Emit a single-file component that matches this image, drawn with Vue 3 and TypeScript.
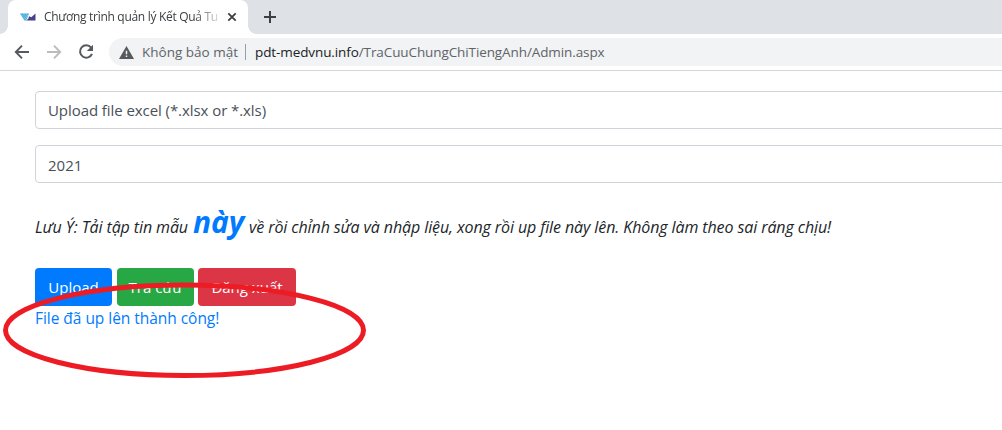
<script setup lang="ts">
interface Action {
  label: string
  kind: string
}

const actions: Action[] = [
  { label: 'Upload', kind: 'primary' },
  { label: 'Tra cứu', kind: 'success' },
  { label: 'Đăng xuất', kind: 'danger' },
]
</script>

<template>
  <div class="window">
    <header class="tabstrip">
      <div class="tab">
        <svg class="favicon" width="16" height="9" viewBox="0 0 16 9">
          <path d="M0 0.5H9L7.5 4.2L6 7.5H4.5Z" fill="#35a5d8" />
          <path d="M1 1.2L6 6.8M3.3 0.8L7 4.8M5.8 .6L8 3M4.8 .6L2.4 3M7.6 .6L3.7 5M8.6 1.6L4.6 6.6" stroke="#c4eaf7" stroke-width=".4" />
          <path d="M15.5 0.5V7.5H6Q8.5 6.5 9.2 3.2L11.3 4.2Z" fill="#46438c" />
        </svg>
        <span class="tab-title">Chương trình quản lý Kết Quả Tu</span>
        <svg class="tab-close" width="10" height="10" viewBox="0 0 10 10">
          <path d="M1.3 1.3L8.7 8.7M8.7 1.3L1.3 8.7" stroke="#3c4043" stroke-width="1.8" />
        </svg>
      </div>
      <svg class="new-tab" width="12" height="12" viewBox="0 0 12 12">
        <path d="M6 0V12M0 6H12" stroke="#3c4043" stroke-width="2" />
      </svg>
    </header>

    <nav class="toolbar">
      <svg class="nav-icon" width="16" height="16" viewBox="0 0 16 16">
        <path d="M15 8H2.5M8 1.7L1.8 8L8 14.3" fill="none" stroke="#56595d" stroke-width="1.9" />
      </svg>
      <svg class="nav-icon" width="16" height="16" viewBox="0 0 16 16">
        <path d="M1 8H13.5M8 1.7L14.2 8L8 14.3" fill="none" stroke="#bbbcbe" stroke-width="1.9" />
      </svg>
      <svg class="nav-icon" width="16" height="16" viewBox="0 0 16 16">
        <path d="M13.1 3.6A6.2 6.2 0 1 0 14 9.8" fill="none" stroke="#56595d" stroke-width="2" />
        <path d="M15 0.8V7H8.8Z" fill="#56595d" />
      </svg>
      <div class="omnibox">
        <svg class="warning" width="15" height="13" viewBox="0 0 15 13">
          <path d="M7.5 0L15 13H0Z" fill="#55585c" />
          <path d="M7.5 4.8V8.2M7.5 9.5V11" stroke="#f1f3f4" stroke-width="1.5" />
        </svg>
        <span class="insecure">Không bảo mật</span>
        <span class="divider"></span>
        <span class="url"><b>pdt-medvnu.info</b>/TraCuuChungChiTiengAnh/Admin.aspx</span>
      </div>
    </nav>

    <main class="page">
      <div class="field"><span class="file-label">Upload file excel (*.xlsx or *.xls)</span></div>
      <div class="field"><span class="year">2021</span></div>
      <p class="note"><span class="note-start">Lưu Ý: Tải tập tin mẫu</span><a class="sample">này</a><span class="note-end">về rồi chỉnh sửa và nhập liệu, xong rồi up file này lên. Không làm theo sai ráng chịu!</span></p>
      <div class="actions">
        <button v-for="a in actions" :key="a.kind" class="btn" :class="a.kind">{{ a.label }}</button>
      </div>
      <div class="message"><span>File đã up lên thành công!</span></div>
    </main>

    <svg class="highlight" width="370" height="104" viewBox="0 0 370 104">
      <ellipse cx="184.5" cy="52.3" rx="179" ry="45.2" fill="none" stroke="#ed1c24" stroke-width="5" />
    </svg>
  </div>
</template>

<style>
body {
  margin: 0;
  background: #fff;
}
</style>

<style scoped>
.window {
  position: relative;
  width: 1002px;
  height: 430px;
  overflow: hidden;
  background: #fff;
  font-family: "Open Sans", "Noto Sans", sans-serif;
  white-space: nowrap;
}
.tabstrip {
  display: flex;
  align-items: flex-start;
  height: 34px;
  padding-left: 8px;
  background: #dee1e6;
}
.tab {
  position: relative;
  display: flex;
  align-items: center;
  box-sizing: border-box;
  width: 240px;
  height: 34px;
  padding-left: 12px;
  border-radius: 8px 8px 0 0;
  background: #fff;
}
.tab::before,
.tab::after {
  content: "";
  position: absolute;
  bottom: 0;
  width: 8px;
  height: 8px;
}
.tab::before {
  left: -8px;
  background: radial-gradient(circle at 0 0, transparent 7.5px, #fff 8px);
}
.tab::after {
  right: -8px;
  background: radial-gradient(circle at 100% 0, transparent 7.5px, #fff 8px);
}
.favicon {
  margin-right: 8px;
}
.tab-title {
  width: 174px;
  overflow: hidden;
  font-size: 12px;
  line-height: 20px;
  letter-spacing: -0.3px;
  color: #3c4043;
  mask-image: linear-gradient(to right, #000 150px, transparent 180px);
}
.tab-close {
  margin-left: 9px;
}
.new-tab {
  margin: 11px 0 0 16px;
}
.toolbar {
  display: flex;
  align-items: center;
  box-sizing: border-box;
  height: 37px;
  padding-left: 14px;
  border-bottom: 1px solid #d5d7da;
}
.nav-icon {
  flex: none;
  margin-right: 16px;
}
.omnibox {
  display: flex;
  flex: 1;
  align-items: center;
  height: 28px;
  margin-left: -1px;
  padding-left: 10px;
  border-radius: 14px 0 0 14px;
  background: #f1f3f4;
  font-size: 13.5px;
  color: #5f6368;
}
.warning {
  margin-right: 8px;
}
.insecure {
  width: 103px;
}
.divider {
  width: 1px;
  height: 16px;
  margin-right: 9px;
  background: #9b9ea2;
}
.url {
  letter-spacing: -0.1px;
}
.url b {
  font-weight: 400;
  color: #202124;
}
.page {
  padding: 20px 0 0 35px;
}
.field {
  display: flex;
  align-items: center;
  box-sizing: border-box;
  width: 1000px;
  height: 38px;
  margin-bottom: 16px;
  padding-left: 12px;
  border: 1px solid #ced4da;
  border-radius: 4px;
  font-size: 15px;
  color: #495057;
}
.file-label {
  letter-spacing: -0.07px;
}
.year {
  padding-top: 1px;
}
.note {
  display: flex;
  align-items: baseline;
  height: 50px;
  margin: 0;
  line-height: 45px;
  font-size: 16px;
  letter-spacing: -0.1px;
  font-style: italic;
  color: #212529;
}
.note-start {
  width: 158px;
}
.sample {
  width: 56px;
  font-size: 30px;
  font-weight: 700;
  color: #007bff;
}
.actions {
  display: flex;
  gap: 4.5px;
  margin-top: 19px;
}
.btn {
  box-sizing: border-box;
  width: 77px;
  height: 38px;
  padding: 0;
  border: 0;
  border-radius: 4px;
  font-family: inherit;
  font-size: 15px;
  color: #fff;
}
.primary {
  background: #007bff;
}
.success {
  background: #28a745;
}
.danger {
  width: 98px;
  background: #dc3545;
}
.message {
  line-height: 24px;
  font-size: 15.5px;
  letter-spacing: -0.04px;
  color: #007bff;
}
.highlight {
  position: absolute;
  left: 0;
  top: 278px;
}
</style>
